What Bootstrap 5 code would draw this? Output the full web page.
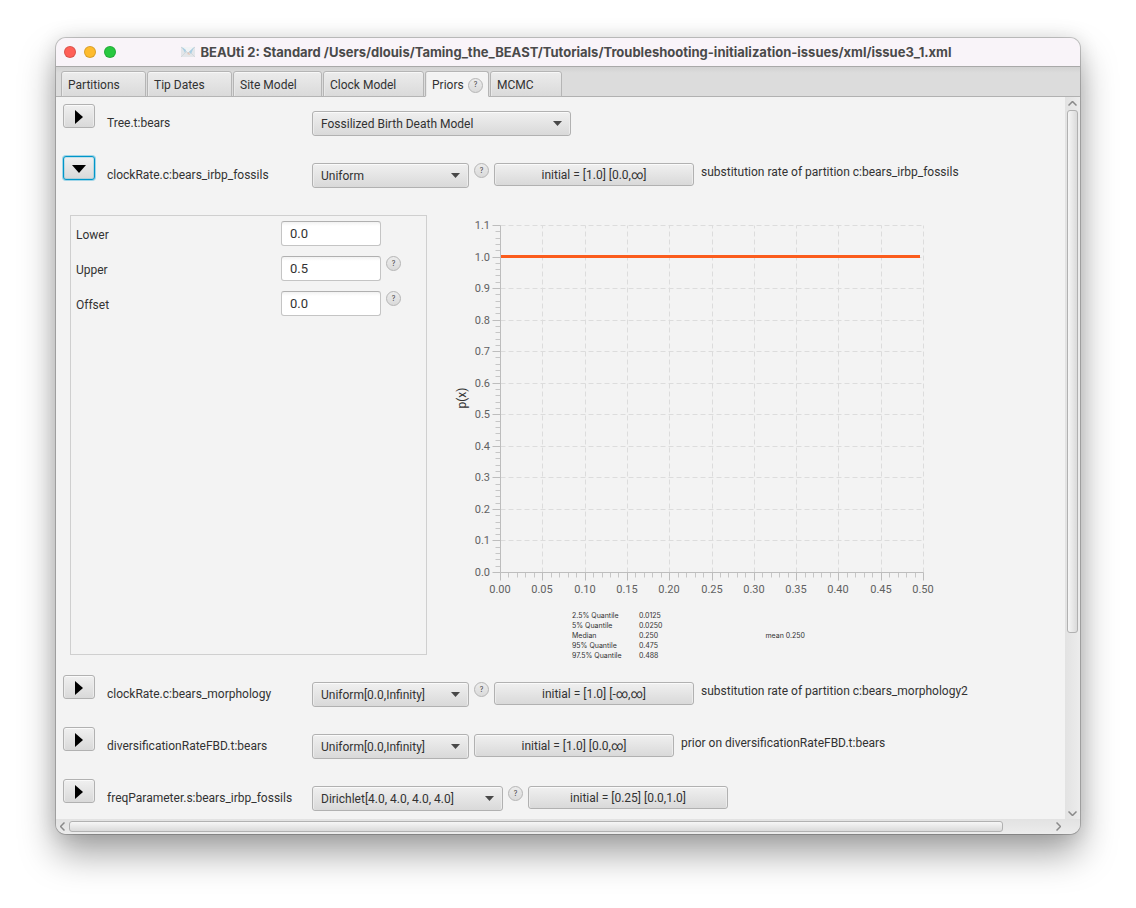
<!DOCTYPE html>
<html lang="en">
<head>
<meta charset="utf-8">
<meta name="viewport" content="width=device-width, initial-scale=1">
<title>BEAUti 2</title>
<link href="https://cdn.jsdelivr.net/npm/bootstrap@5.3.0/dist/css/bootstrap.min.css" rel="stylesheet">
<style>
  body { background: #fff; color: #323232; font: 12px/16px Roboto, "Liberation Sans", sans-serif; }
  .desk { padding: 38px 56px 74px; }
  .win { background: #f3f3f3; border-radius: 10px; box-shadow: 0 0 0 1px rgba(0,0,0,.2), 0 20px 36px rgba(0,0,0,.36), 0 0 20px rgba(0,0,0,.12); }
  .titlebar { height: 29px; background: #f9f4f9; border-bottom: 1px solid #a9a9a9; border-radius: 10px 10px 0 0; padding-left: 8px; }
  .title-mid { padding-right: 64px; }
  .title-text { font: bold 13px/18px Inter, sans-serif; color: #4a4a4a; }
  .light { width: 12px; height: 12px; border-radius: 50%; border: 1px solid rgba(0,0,0,.14); }
  .tabstrip { height: 30px; padding: 4px 5px 0; background: linear-gradient(#d2d2d2, #dcdcdc 6px); border-bottom: 1px solid #b1b1b1; gap: 1px; }
  .tab-btn { height: 26px; margin-bottom: -1px; padding: 2px 6px 0; border: 1px solid #b5b5b5; border-radius: 3px 3px 0 0; background: linear-gradient(#ececec, #dadada); color: #323232; box-shadow: inset 0 1px #f7f7f7, inset 1px 0 #e8e8e8; text-align: left; white-space: nowrap; }
  .tab-btn.active { background: #f3f3f3; border-bottom-color: #f3f3f3; padding-right: 5px; }
  .w-a { width: 85px; } .w-b { width: 89px; } .w-c { width: 101px; } .w-d { width: 64px; } .w-e { width: 72px; }
  .face { border: 1px solid #b1b1b1; border-radius: 3px; background-color: #e4e4e4; background-image: linear-gradient(#f0f0f0, #d9d9d9); box-shadow: inset 0 1px #fafafa, inset 1px 0 #ececec, inset -1px 0 #ececec; color: #323232; padding: 0; }
  .toggler { width: 32px; height: 24px; }
  .toggler.open { border-color: #0096c9; box-shadow: 0 0 0 1px rgba(3,158,211,.35), inset 0 0 0 1px rgba(3,158,211,.2); }
  .rows { padding: 7px 7px 0; }
  .prior-row { height: 52px; }
  .prior-name { width: 205px; padding-top: 11px; margin-left: 12px; }
  .prior-set { padding-top: 7px; gap: 5px; }
  .combo { appearance: none; height: 25px; padding: 0 22px 0 8px;
    background-image: url("data:image/svg+xml,%3Csvg xmlns='http://www.w3.org/2000/svg' width='9' height='5'%3E%3Cpath d='M0 0h9L4.500 5z' fill='%23484848'/%3E%3C/svg%3E"), linear-gradient(#f0f0f0, #d9d9d9);
    background-repeat: no-repeat; background-position: right 8px center, 0 0; }
  .c-tree { width: 259px; } .c-uni { width: 157px; } .c-dir { width: 191px; }
  .initial { width: 200px; height: 23px; }
  .note { padding: 1px 0 0 2px; white-space: nowrap; }
  .help { width: 15px; height: 15px; border-radius: 50%; border: 1px solid #b5b5b5; background: linear-gradient(#ececec, #dadada); padding: 0; font: 7px/12px Inter, sans-serif; color: #444; }
  .detail { padding: 7px 7px 14px; }
  .param-box { width: 357px; border: 1px solid #cfcfcf; padding: 5px; margin-bottom: 6px; }
  .param { height: 35px; }
  .param label { width: 205px; padding-top: 6px; }
  .field { width: 100px; height: 25px; border: 1px solid #c4c4c4; border-top-color: #b0b0b0; border-radius: 3px; background: linear-gradient(#f2f2f2, #fff 4px); padding: 0 8px; font-size: 13px; color: #323232; margin-right: 5px; }
  .chart-col { margin-left: 23px; width: 500px; }
  .tick-label { font: 11px Roboto, sans-serif; fill: #616161; }
  .axis-name { font: 12px Roboto, sans-serif; fill: #323232; }
  .stats { font: 7px/10px Inter, sans-serif; margin-left: 122px; }
  .stats td { padding: 0; }
  .stats td:first-child { width: 67px; }
  .mean { font: 7px/10px Inter, sans-serif; margin-left: 103px; }
  .vbar { width: 15px; padding: 4px 2px 3px; background: linear-gradient(90deg, #e2e2e2, #ececec); }
  .hbar { height: 15px; padding: 2px 19px 2px 4px; gap: 4px; background: linear-gradient(#e2e2e2, #ececec); border-radius: 0 0 10px 10px; }
  .track { min-width: 0; min-height: 0; }
  .thumb { border: 1px solid #b1b1b1; border-radius: 3px; }
  .thumb-v { height: 75%; width: 11px; background: linear-gradient(90deg, #f6f6f6, #dadada); }
  .thumb-h { width: 95%; height: 11px; background: linear-gradient(#f6f6f6, #dadada); }
</style>
</head>
<body>
<div class="desk">
<main class="win">
  <header class="titlebar d-flex align-items-center">
    <div class="d-flex gap-2">
      <span class="light" style="background:#ff5f57"></span>
      <span class="light" style="background:#febb2e"></span>
      <span class="light" style="background:#28c840"></span>
    </div>
    <div class="title-mid flex-grow-1 d-flex justify-content-center align-items-center">
      <svg class="me-1" width="16" height="12" viewBox="0 0 16 12" aria-hidden="true">
        <rect x="1" y="1" width="14" height="10" fill="#e3e6e9"/>
        <path d="M1 1l7 6 7-6" fill="#f1f3f5" stroke="#ccd4da"/><path d="M1 11l5-5M15 11l-5-5" stroke="#d3d8dc"/>
        <path d="M2 1l4 3-1 3zM9 6l5-5-3 7z" fill="#a9cfe4"/><path d="M7 8l2-2 1 3z" fill="#e5c7b8"/>
      </svg>
      <span class="title-text text-nowrap">BEAUti 2: Standard /Users/dlouis/Taming_the_BEAST/Tutorials/Troubleshooting-initialization-issues/xml/issue3_1.xml</span>
    </div>
  </header>

  <nav class="tabstrip d-flex" role="tablist">
    <button class="tab-btn w-a" role="tab">Partitions</button>
    <button class="tab-btn w-a" role="tab">Tip Dates</button>
    <button class="tab-btn w-b" role="tab">Site Model</button>
    <button class="tab-btn w-c" role="tab">Clock Model</button>
    <div class="tab-btn w-d active d-flex align-items-center justify-content-between" role="tab" aria-selected="true">Priors <button class="help" aria-label="Help on priors">?</button></div>
    <button class="tab-btn w-e" role="tab">MCMC</button>
  </nav>

  <div class="d-flex">
    <div class="rows flex-grow-1 overflow-hidden">
      <div class="prior-row d-flex align-items-start">
        <button class="face toggler" aria-label="Expand"><svg width="8" height="14"><path d="M0 0l8 7-8 7z"/></svg></button>
        <label class="prior-name" for="p1">Tree.t:bears</label>
        <div class="prior-set d-flex align-items-start">
          <select class="face combo c-tree" id="p1"><option>Fossilized Birth Death Model</option></select>
        </div>
      </div>
      <div class="prior-row d-flex align-items-start">
        <button class="face toggler open" aria-label="Collapse"><svg width="14" height="8"><path d="M0 0h14L7 8z"/></svg></button>
        <label class="prior-name" for="p2">clockRate.c:bears_irbp_fossils</label>
        <div class="prior-set d-flex align-items-start">
          <select class="face combo c-uni" id="p2"><option>Uniform</option></select>
          <button class="help" aria-label="Help">?</button>
          <button class="face initial">initial = [1.0] [0.0,∞]</button>
          <span class="note">substitution rate of partition c:bears_irbp_fossils</span>
        </div>
      </div>

      <section class="detail d-flex">
        <div class="param-box flex-shrink-0">
          <div class="param d-flex align-items-start"><label for="lo">Lower</label><input class="field" id="lo" value="0.0"></div>
          <div class="param d-flex align-items-start"><label for="up">Upper</label><input class="field" id="up" value="0.5"><button class="help" aria-label="Help">?</button></div>
          <div class="param d-flex align-items-start"><label for="of">Offset</label><input class="field" id="of" value="0.0"><button class="help" aria-label="Help">?</button></div>
        </div>
        <div class="chart-col flex-shrink-0">
          <svg id="chart" class="d-block" width="500" height="396" role="img" aria-label="Density of the uniform prior"></svg>
          <div class="d-flex align-items-center">
            <table class="stats">
              <tr><td>2.5% Quantile</td><td>0.0125</td></tr>
              <tr><td>5% Quantile</td><td>0.0250</td></tr>
              <tr><td>Median</td><td>0.250</td></tr>
              <tr><td>95% Quantile</td><td>0.475</td></tr>
              <tr><td>97.5% Quantile</td><td>0.488</td></tr>
            </table>
            <span class="mean">mean 0.250</span>
          </div>
        </div>
      </section>

      <div class="prior-row d-flex align-items-start">
        <button class="face toggler" aria-label="Expand"><svg width="8" height="14"><path d="M0 0l8 7-8 7z"/></svg></button>
        <label class="prior-name" for="p3">clockRate.c:bears_morphology</label>
        <div class="prior-set d-flex align-items-start">
          <select class="face combo c-uni" id="p3"><option>Uniform[0.0,Infinity]</option></select>
          <button class="help" aria-label="Help">?</button>
          <button class="face initial">initial = [1.0] [-∞,∞]</button>
          <span class="note">substitution rate of partition c:bears_morphology2</span>
        </div>
      </div>
      <div class="prior-row d-flex align-items-start">
        <button class="face toggler" aria-label="Expand"><svg width="8" height="14"><path d="M0 0l8 7-8 7z"/></svg></button>
        <label class="prior-name" for="p4">diversificationRateFBD.t:bears</label>
        <div class="prior-set d-flex align-items-start">
          <select class="face combo c-uni" id="p4"><option>Uniform[0.0,Infinity]</option></select>
          <button class="face initial">initial = [1.0] [0.0,∞]</button>
          <span class="note">prior on diversificationRateFBD.t:bears</span>
        </div>
      </div>
      <div class="d-flex align-items-start pb-2">
        <button class="face toggler" aria-label="Expand"><svg width="8" height="14"><path d="M0 0l8 7-8 7z"/></svg></button>
        <label class="prior-name" for="p5">freqParameter.s:bears_irbp_fossils</label>
        <div class="prior-set d-flex align-items-start">
          <select class="face combo c-dir" id="p5"><option>Dirichlet[4.0, 4.0, 4.0, 4.0]</option></select>
          <button class="help" aria-label="Help">?</button>
          <button class="face initial">initial = [0.25] [0.0,1.0]</button>
        </div>
      </div>
    </div>
    <div class="vbar d-flex flex-column align-items-center gap-1">
      <svg class="flex-shrink-0" width="9" height="5" fill="none" stroke="#8a8a8a" stroke-width="1.5"><path d="M.5 4.500l4-4 4 4"/></svg>
      <div class="track flex-grow-1 d-flex align-items-start"><div class="thumb thumb-v"></div></div>
      <svg class="flex-shrink-0" width="9" height="5" fill="none" stroke="#8a8a8a" stroke-width="1.5"><path d="M.5 .5l4 4 4-4"/></svg>
    </div>
  </div>
  <div class="hbar d-flex align-items-center">
    <svg class="flex-shrink-0" width="5" height="9" fill="none" stroke="#8a8a8a" stroke-width="1.5"><path d="M4.500 .5l-4 4 4 4"/></svg>
    <div class="track flex-grow-1"><div class="thumb thumb-h"></div></div>
    <svg class="flex-shrink-0" width="5" height="9" fill="none" stroke="#8a8a8a" stroke-width="1.5"><path d="M.5 .5l4 4-4 4"/></svg>
  </div>
</main>
</div>
<script src="https://cdn.jsdelivr.net/npm/bootstrap@5.3.0/dist/js/bootstrap.bundle.min.js"></script>
<script>
  // Uniform(0, 0.5) density: axes, dashed grid and the curve
  const L = 50, R = 473, T = 10, B = 357;
  const line = (x1, y1, x2, y2, extra) => `<path d="M${x1 + .5} ${y1 + .5}L${x2 + .5} ${y2 + .5}" ${extra}/>`;
  const grid = 'stroke="#dcdcdc" stroke-dasharray="5 3"', axis = 'stroke="#bdbdbd"', minor = 'stroke="#c6c6c6"';
  let out = '';
  for (let i = 0; i <= 50; i++) {
    const x = Math.round(L + (R - L) * i / 50);
    if (i % 5) { out += line(x, B, x, B + 5, minor); continue; }
    if (i) out += line(x, B, x, T, grid);
    out += line(x, B, x, B + 8, axis) + `<text class="tick-label" x="${x}" y="${B + 21}" text-anchor="middle">${(i / 100).toFixed(2)}</text>`;
  }
  for (let i = 0; i <= 55; i++) {
    const y = Math.round(B - (B - T) * i / 55);
    if (i % 5) { out += line(L - 5, y, L, y, minor); continue; }
    if (i) out += line(L, y, R, y, grid);
    out += line(L - 8, y, L, y, axis) + `<text class="tick-label" x="${L - 10}" y="${y + 4}" text-anchor="end">${(i / 50).toFixed(1)}</text>`;
  }
  out += line(L, T, L, B, axis) + line(L, B, R, B, axis);
  out += `<path d="M${L + 1} 41.500H${R - 3}" stroke="#fb5c1c" stroke-width="3"/>`;
  out += '<text class="axis-name" transform="translate(16 183) rotate(-90)" text-anchor="middle">p(x)</text>';
  document.getElementById('chart').innerHTML = out;
</script>
</body>
</html>
